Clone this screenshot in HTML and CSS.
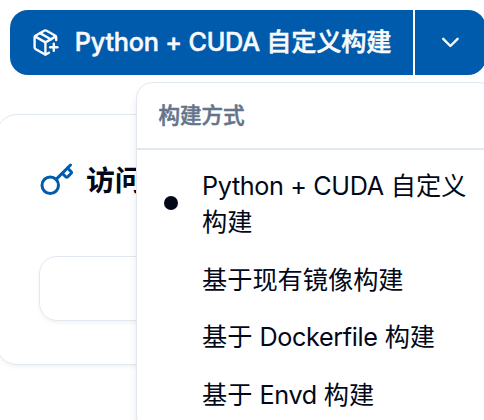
FILE: index.html
```html
<!DOCTYPE html>
<html lang="zh-CN">
<head>
<meta charset="utf-8">
<title>构建方式</title>
<link rel="stylesheet" href="styles.css">
</head>
<body>
<div class="split-button">
  <button class="main-action">
    <svg class="icon" viewBox="0 0 24 24"><path d="M16 16h6"/><path d="M19 13v6"/><path d="M21 10V8a2 2 0 0 0-1-1.73l-7-4a2 2 0 0 0-2 0l-7 4A2 2 0 0 0 3 8v8a2 2 0 0 0 1 1.73l7 4a2 2 0 0 0 2 0l2-1.14"/><path d="m7.5 4.27 9 5.15"/><path d="M3.29 7 12 12l8.71-5"/><path d="M12 22V12"/></svg>
    <span class="action-text">Python + CUDA 自定义构建</span>
  </button>
  <button class="toggle" aria-label="构建方式">
    <svg class="icon" viewBox="0 0 24 24"><path d="m6 9 6 6 6-6"/></svg>
  </button>
</div>
<section class="card">
  <h2 class="card-title">
    <svg class="icon key" viewBox="0 0 24 24"><path d="m15.5 7.5 2.3 2.3a1 1 0 0 0 1.4 0l2.1-2.1a1 1 0 0 0 0-1.4L19 4"/><path d="m21 2-9.6 9.6"/><circle cx="7.5" cy="15.5" r="5.5"/></svg>
    <span class="title-text">访问</span>
  </h2>
  <div class="field"></div>
</section>
<div class="menu" role="menu">
  <div class="menu-label">构建方式</div>
  <div class="separator"></div>
  <div class="item selected" role="menuitemradio"><span class="latin">Python + CUDA</span> 自定义构建</div>
  <div class="item" role="menuitemradio">基于现有镜像构建</div>
  <div class="item" role="menuitemradio">基于 <span class="latin">Dockerfile</span> 构建</div>
  <div class="item" role="menuitemradio">基于 <span class="latin">Envd</span> 构建</div>
</div>
</body>
</html>
```

FILE: styles.css
```css
* { box-sizing: border-box; }
body {
  margin: 0;
  width: 484px;
  height: 420px;
  padding-top: 10px;
  overflow: hidden;
  position: relative;
  background: #fff;
  color: #020817;
  font-family: Inter, "Noto Sans CJK SC", sans-serif;
  font-size: 25.2px;
  line-height: 36px;
}
.icon {
  flex: none;
  width: 28.8px;
  height: 28.8px;
  fill: none;
  stroke: currentColor;
  stroke-width: 2;
  stroke-linecap: round;
  stroke-linejoin: round;
}
.split-button {
  display: flex;
  gap: 2px;
  width: 476px;
  height: 65px;
  margin-left: 10px;
}
.split-button button {
  display: flex;
  align-items: center;
  border: 0;
  background: #005bac;
  color: #f8fafc;
  font: inherit;
  font-weight: 500;
  white-space: nowrap;
}
.split-button .main-action {
  width: 403px;
  padding: 0 0 0 21px;
  gap: 15px;
  border-radius: 18px 0 0 18px;
}
.action-text {
  margin-top: -1px;
  letter-spacing: -0.2px;
  -webkit-text-stroke: 0.5px currentColor;
}
.split-button .toggle {
  flex: 1;
  padding: 0;
  justify-content: center;
  border-radius: 0 18px 18px 0;
}
.card {
  height: 251px;
  margin: 39px -20px 0 -4px;
  padding: 47px 42px 0;
  border: 1px solid #e2e8f0;
  border-radius: 21px;
  box-shadow: 0 2px 4px rgba(0, 0, 0, .05);
}
.card-title {
  display: flex;
  align-items: center;
  gap: 11px;
  height: 36px;
  margin: 0;
  font-size: 28.8px;
  font-weight: 600;
}
.title-text { margin-top: 2px; }
.key {
  width: 36px;
  height: 36px;
  color: #005bac;
}
.field {
  height: 65px;
  margin-top: 58px;
  border: 1px solid #e2e8f0;
  border-radius: 18px;
  box-shadow: 0 2px 4px rgba(0, 0, 0, .05);
}
.menu {
  position: absolute;
  left: 136px;
  top: 82px;
  width: 360px;
  padding: 7px 0 8px;
  border: 1px solid #e2e8f0;
  border-radius: 16px;
  background: #fff;
  box-shadow: 0 7px 11px -2px rgba(0, 0, 0, .1), 0 4px 7px -4px rgba(0, 0, 0, .1);
}
.menu-label {
  height: 50px;
  padding-left: 21.5px;
  color: #64748b;
  font-size: 21.6px;
  font-weight: 500;
  line-height: 50px;
  letter-spacing: -0.1px;
  -webkit-text-stroke: 0.5px currentColor;
}
.separator {
  height: 2px;
  margin: 8px 0 7.2px;
  background: #e2e8f0;
}
.item {
  position: relative;
  padding: 10.8px 21px 10.8px 65px;
}
.latin { letter-spacing: -0.36px; }
.selected::before {
  content: "";
  position: absolute;
  left: 27px;
  top: calc(50% - 8px);
  width: 14px;
  height: 14px;
  border-radius: 50%;
  background: currentColor;
}
```
